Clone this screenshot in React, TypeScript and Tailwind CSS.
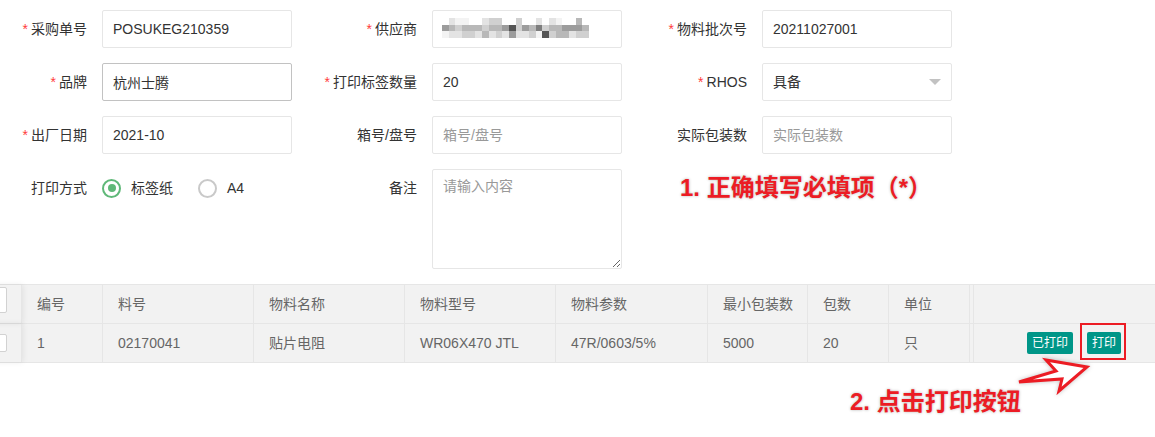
import React from "react";

const shades = [
  "bg-transparent",
  "bg-[#f3f3f3]",
  "bg-[#e3e3e3]",
  "bg-[#d0d0d0]",
  "bg-[#b8b8b8]",
  "bg-[#9c9c9c]",
  "bg-[#7d7d7d]",
  "bg-[#555555]",
];

// blurred supplier name, drawn as a mosaic
const mosaic = [
  "02110023300300202100400",
  "54344434457354634455540",
  "12233242325223173442330",
];

function Label({ req, children }: { req?: boolean; children: React.ReactNode }) {
  return (
    <div className="w-[102px] shrink-0 pr-[15px] h-[38px] flex items-center justify-end text-[14px] text-[#333]">
      <span className="whitespace-nowrap">
        {req && <span className="text-[#ff3b3b] mr-[3px]">*</span>}
        {children}
      </span>
    </div>
  );
}

function Field({ value, placeholder, dark }: { value?: string; placeholder?: string; dark?: boolean }) {
  return (
    <input
      readOnly
      value={value ?? ""}
      placeholder={placeholder}
      className={`w-[190px] h-[38px] shrink-0 border ${dark ? "border-[#c2c2c2]" : "border-[#e6e6e6]"} rounded-[2px] bg-white px-[10px] text-[14px] text-[#333] outline-none placeholder:text-[#999]`}
    />
  );
}

function Radio({ on, label }: { on?: boolean; label: string }) {
  return (
    <div className="flex items-center gap-[10px] mr-[25px]">
      <div
        className={`w-[19px] h-[19px] rounded-full border-2 flex items-center justify-center ${on ? "border-[#5fb878]" : "border-[#c9c9c9]"}`}
      >
        {on && <div className="w-[8px] h-[8px] rounded-full bg-[#5fb878]" />}
      </div>
      <span className="text-[14px] text-[#333]">{label}</span>
    </div>
  );
}

const cols = [
  { w: "w-[81px]", head: "编号", body: "1" },
  { w: "w-[151px]", head: "料号", body: "02170041" },
  { w: "w-[151px]", head: "物料名称", body: "贴片电阻" },
  { w: "w-[151px]", head: "物料型号", body: "WR06X470 JTL" },
  { w: "w-[152px]", head: "物料参数", body: "47R/0603/5%" },
  { w: "w-[100px]", head: "最小包装数", body: "5000" },
  { w: "w-[81px]", head: "包数", body: "20" },
  { w: "w-[81px]", head: "单位", body: "只" },
];

export default function App() {
  return (
    <div className="relative w-[1155px] h-[437px] overflow-hidden bg-white font-['Liberation_Sans','Noto_Sans_CJK_SC',sans-serif]">
      <div className="pt-[10px]">
        <div className="flex h-[38px] mb-[15px]">
          <div className="w-[330px] flex">
            <Label req>采购单号</Label>
            <Field value="POSUKEG210359" />
          </div>
          <div className="w-[330px] flex">
            <Label req>供应商</Label>
            <div className="w-[190px] h-[38px] border border-[#e6e6e6] rounded-[2px] pl-[9px] pt-[7px]">
              {mosaic.map((row, i) => (
                <div key={i} className="flex h-[6.7px]">
                  {row.split("").map((c, j) => (
                    <div key={j} className={`w-[6.7px] h-full ${shades[Number(c)]}`} />
                  ))}
                </div>
              ))}
            </div>
          </div>
          <div className="w-[330px] flex">
            <Label req>物料批次号</Label>
            <Field value="20211027001" />
          </div>
        </div>

        <div className="flex h-[38px] mb-[15px]">
          <div className="w-[330px] flex">
            <Label req>品牌</Label>
            <Field value="杭州士腾" dark />
          </div>
          <div className="w-[330px] flex">
            <Label req>打印标签数量</Label>
            <Field value="20" />
          </div>
          <div className="w-[330px] flex">
            <Label req>RHOS</Label>
            <div className="w-[190px] h-[38px] border border-[#e6e6e6] rounded-[2px] px-[10px] flex items-center justify-between text-[14px] text-[#333]">
              <span>具备</span>
              <svg width="12" height="6" viewBox="0 0 12 6">
                <polygon points="0,0 12,0 6,6" fill="#c2c2c2" />
              </svg>
            </div>
          </div>
        </div>

        <div className="flex h-[38px] mb-[15px]">
          <div className="w-[330px] flex">
            <Label req>出厂日期</Label>
            <Field value="2021-10" />
          </div>
          <div className="w-[330px] flex">
            <Label>箱号/盘号</Label>
            <Field placeholder="箱号/盘号" />
          </div>
          <div className="w-[330px] flex">
            <Label>实际包装数</Label>
            <Field placeholder="实际包装数" />
          </div>
        </div>

        <div className="flex h-[100px]">
          <div className="w-[330px] flex">
            <Label>打印方式</Label>
            <div className="h-[38px] flex items-center">
              <Radio on label="标签纸" />
              <Radio label="A4" />
            </div>
          </div>
          <div className="w-[330px] flex">
            <Label>备注</Label>
            <textarea
              readOnly
              placeholder="请输入内容"
              className="w-[190px] h-[100px] border border-[#e6e6e6] rounded-[2px] px-[10px] py-[6px] text-[14px] leading-[20px] text-[#333] outline-none placeholder:text-[#999]"
            />
          </div>
          <div className="h-[38px] pl-[20px] flex items-center whitespace-nowrap text-[24px] font-bold text-[#ec1c24] [text-shadow:0_0_3px_rgba(0,0,0,0.3)]">
            1. 正确填写必填项（*）
          </div>
        </div>
      </div>

      <div className="mt-[15px] -ml-[26px] w-[1182px] text-[14px] text-[#666] whitespace-nowrap">
        <div className="flex h-[39px] border-t border-[#e6e6e6] bg-[#f2f2f2]">
          <div className="relative z-10 w-[48px] h-full shrink-0 border-r border-[#e6e6e6] flex justify-center shadow-[1px_0_6px_rgba(0,0,0,0.08)]">
            <div className="w-[18px] h-[26px] mt-[2px] bg-white border border-[#d2d2d2] rounded-[2px]" />
          </div>
          {cols.map((c) => (
            <div key={c.head} className={`${c.w} h-full shrink-0 border-r border-[#e6e6e6] px-[15px] flex items-center`}>
              {c.head}
            </div>
          ))}
          <div className="w-[3px] shrink-0" />
          <div className="flex-1 h-full border-l border-[#e6e6e6]" />
        </div>
        <div className="flex h-[40px] border-y border-[#e6e6e6] bg-[#f2f2f2]">
          <div className="relative z-10 w-[48px] h-full shrink-0 border-r border-[#e6e6e6] flex items-center justify-center shadow-[1px_0_6px_rgba(0,0,0,0.08)]">
            <div className="w-[18px] h-[18px] bg-white border border-[#d2d2d2] rounded-[2px]" />
          </div>
          {cols.map((c) => (
            <div key={c.head} className={`${c.w} h-full shrink-0 border-r border-[#e6e6e6] px-[15px] flex items-center`}>
              {c.body}
            </div>
          ))}
          <div className="w-[3px] shrink-0" />
          <div className="flex-1 h-full border-l border-[#e6e6e6] flex items-center justify-end gap-[14px] pr-[35px]">
            <button className="h-[22px] px-[5px] rounded-[2px] bg-[#009688] text-white text-[12px] leading-[22px]">
              已打印
            </button>
            <div className="relative">
              <button className="h-[22px] px-[5px] rounded-[2px] bg-[#009688] text-white text-[12px] leading-[22px]">
                打印
              </button>
              <div className="absolute left-[-7px] top-[-9px] w-[46px] h-[37px] border-2 border-[#ec1c24]" />
            </div>
          </div>
        </div>
      </div>

      <div className="pl-[850px] pt-[27px] text-[24px] leading-[24px] font-bold text-[#ec1c24] [text-shadow:0_0_3px_rgba(0,0,0,0.3)]">
        2. 点击打印按钮
      </div>

      <svg className="absolute left-[1010px] top-[352px] drop-shadow-[0_0_2px_rgba(0,0,0,0.25)]" width="90" height="50" viewBox="0 0 90 50">
        <polygon
          points="9,30 46,19 36,8 77,15 49,39 52,27"
          fill="#fff"
          stroke="#ec1c24"
          strokeWidth="3"
          strokeLinejoin="miter"
        />
      </svg>
    </div>
  );
}
